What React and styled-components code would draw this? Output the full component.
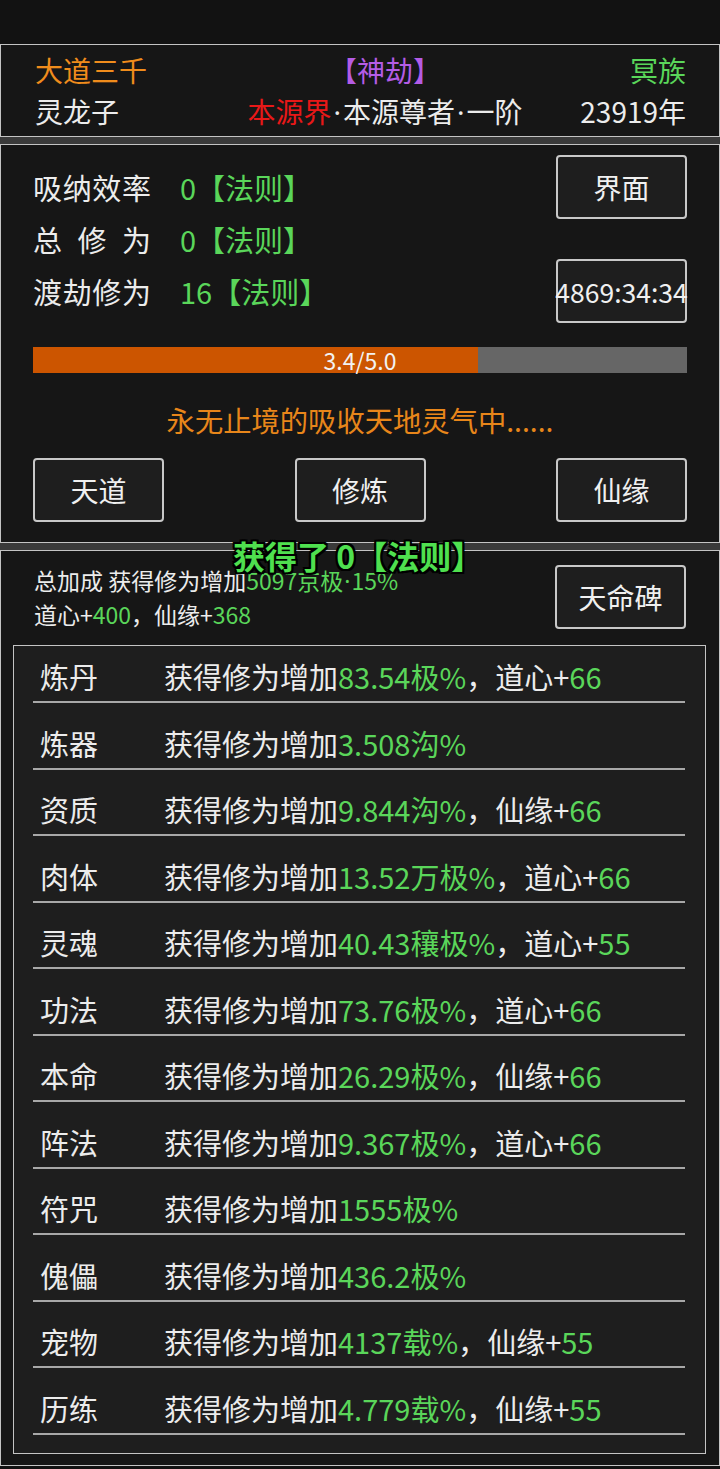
import React from "react";
import styled, { createGlobalStyle } from "styled-components";

const GREEN = "#5ad65a";

const Global = createGlobalStyle`
  html, body { margin: 0; padding: 0; background: #121212; }
  body { font-family: "Noto Sans CJK SC", "Noto Sans", sans-serif; color: #ececec; }
`;

const Page = styled.div`
  width: 720px;
  background: #121212;
  padding-top: 44px;
`;

const Panel = styled.section`
  position: relative;
  background: #161616;
  border: 1px solid #c4c4c4;
  padding: ${(p) => p.$pad || "0"};
`;

const Gap = styled.div`
  height: 7px;
  background: #3a3a3a;
`;

const HeaderRow = styled.div`
  display: grid;
  grid-template-columns: 200px 300px 1fr;
  font-size: 28px;
  line-height: 41px;
  height: 41px;
  white-space: nowrap;
`;

const Cell = styled.div`
  text-align: ${(p) => p.$align || "left"};
  color: ${(p) => p.$color || "#ececec"};
`;

const C = styled.span`
  color: ${(p) => p.$c};
`;

const Dot = styled.span`
  font-family: "Noto Sans", "DejaVu Sans", sans-serif;
  line-height: 0;
  margin: 0 ${(p) => p.$m || "2px"};
`;

const TopSection = styled.div`
  display: flex;
  justify-content: space-between;
  align-items: flex-start;
  padding: ${(p) => p.$pad || "0"};
`;

const Stats = styled.div`
  margin-top: 6px;
  display: flex;
  flex-direction: column;
`;

const StatRow = styled.div`
  display: flex;
  align-items: center;
  height: 52px;
  font-size: 29px;
  white-space: nowrap;
`;

const StatLabel = styled.div`
  width: 118px;
  display: flex;
  justify-content: space-between;
  margin-right: 29px;
`;

const StatValue = styled.div`
  color: ${GREEN};
`;

const ButtonCol = styled.div`
  display: flex;
  flex-direction: column;
  gap: 40px;
`;

const Button = styled.button`
  width: 131px;
  height: 64px;
  box-sizing: border-box;
  background: #1e1e1e;
  border: 2px solid #c8c8c8;
  border-radius: 4px;
  color: #f0f0f0;
  font-family: "Noto Sans CJK SC", "Noto Sans", sans-serif;
  font-size: ${(p) => p.$fs || "28px"};
  padding: 0;
  display: flex;
  align-items: center;
  justify-content: center;
  white-space: nowrap;
  overflow: visible;
`;

const Bar = styled.div`
  position: relative;
  margin-top: 24px;
  height: 26px;
  background: #666666;
  display: flex;
  align-items: center;
  justify-content: center;
`;

const BarFill = styled.div`
  position: absolute;
  left: 0;
  top: 0;
  bottom: 0;
  background: #cc5500;
`;

const BarText = styled.span`
  position: relative;
  font-size: 23px;
  line-height: 26px;
  color: #f2f2f2;
`;

const Message = styled.div`
  margin-top: 27px;
  text-align: center;
  font-size: 28.3px;
  line-height: 40px;
  color: #e8861a;
`;

const ButtonRow = styled.div`
  margin-top: 18px;
  display: flex;
  justify-content: space-between;
`;

const Toast = styled.div`
  position: absolute;
  top: -13px;
  left: 232px;
  font-size: 32px;
  line-height: 34px;
  font-weight: 700;
  color: #4fe04f;
  white-space: nowrap;
  text-shadow:
    -2px 0 #000, 2px 0 #000, 0 -2px #000, 0 2px #000,
    -2px -2px #000, 2px 2px #000, -2px 2px #000, 2px -2px #000;
`;

const Bonus = styled.div`
  margin-top: -2px;
  font-size: 23px;
  line-height: 34px;
  white-space: nowrap;
`;

const BonusLine = styled.div`
  height: 34px;
`;

const List = styled.div`
  margin: 14px 13px 0 12px;
  border: 1px solid #c4c4c4;
  background: #1e1e1e;
  padding: 12px 20px 18px 19px;
  display: flex;
  flex-direction: column;
  gap: 21.5px;
`;

const Row = styled.div`
  display: flex;
  align-items: center;
  padding: 0 7px 7px;
  border-bottom: 2px solid #a8a8a8;
  font-size: 29px;
  line-height: 36px;
  white-space: nowrap;
`;

const RowLabel = styled.div`
  width: 124px;
  flex: none;
`;

const rows = [
  ["炼丹", "83.54极%", "道心", "66"],
  ["炼器", "3.508沟%"],
  ["资质", "9.844沟%", "仙缘", "66"],
  ["肉体", "13.52万极%", "道心", "66"],
  ["灵魂", "40.43穰极%", "道心", "55"],
  ["功法", "73.76极%", "道心", "66"],
  ["本命", "26.29极%", "仙缘", "66"],
  ["阵法", "9.367极%", "道心", "66"],
  ["符咒", "1555极%"],
  ["傀儡", "436.2极%"],
  ["宠物", "4137载%", "仙缘", "55"],
  ["历练", "4.779载%", "仙缘", "55"],
];

const stats = [
  ["吸纳效率", "0【法则】"],
  ["总修为", "0【法则】"],
  ["渡劫修为", "16【法则】"],
];

export default function App() {
  return (
    <>
      <Global />
      <Page>
        <Panel $pad="5px 33px 4px 34px">
          <HeaderRow>
            <Cell $color="#f08c1c">大道三千</Cell>
            <Cell $align="center" $color="#b45ce6">【神劫】</Cell>
            <Cell $align="right" $color={GREEN}>冥族</Cell>
          </HeaderRow>
          <HeaderRow>
            <Cell>灵龙子</Cell>
            <Cell $align="center">
              <C $c="#e81818">本源界</C>
              <Dot>·</Dot>本源尊者<Dot>·</Dot>一阶
            </Cell>
            <Cell $align="right">23919年</Cell>
          </HeaderRow>
        </Panel>
        <Gap />
        <Panel $pad="10px 32px 20px 32px">
          <TopSection>
            <Stats>
              {stats.map(([label, value]) => (
                <StatRow key={label}>
                  <StatLabel>
                    {label.split("").map((ch, i) => (
                      <span key={i}>{ch}</span>
                    ))}
                  </StatLabel>
                  <StatValue>{value}</StatValue>
                </StatRow>
              ))}
            </Stats>
            <ButtonCol>
              <Button>界面</Button>
              <Button $fs="26.5px">4869:34:34</Button>
            </ButtonCol>
          </TopSection>
          <Bar>
            <BarFill style={{ width: `${(3.4 / 5) * 100}%` }} />
            <BarText>3.4/5.0</BarText>
          </Bar>
          <Message>永无止境的吸收天地灵气中......</Message>
          <ButtonRow>
            <Button>天道</Button>
            <Button>修炼</Button>
            <Button>仙缘</Button>
          </ButtonRow>
        </Panel>
        <Gap />
        <Panel $pad="14px 0 11px 0">
          <Toast>获得了 0【法则】</Toast>
          <TopSection $pad="0 33px 0 33px">
            <Bonus>
              <BonusLine>
                总加成 获得修为增加
                <C $c={GREEN}>
                  5097京极<Dot $m="1px">·</Dot>15%
                </C>
              </BonusLine>
              <BonusLine>
                道心+<C $c={GREEN}>400</C>，仙缘+<C $c={GREEN}>368</C>
              </BonusLine>
            </Bonus>
            <Button>天命碑</Button>
          </TopSection>
          <List>
            {rows.map(([label, val, attr, n]) => (
              <Row key={label}>
                <RowLabel>{label}</RowLabel>
                <span>
                  获得修为增加<C $c={GREEN}>{val}</C>
                  {attr && (
                    <>
                      ，{attr}+<C $c={GREEN}>{n}</C>
                    </>
                  )}
                </span>
              </Row>
            ))}
          </List>
        </Panel>
      </Page>
    </>
  );
}
